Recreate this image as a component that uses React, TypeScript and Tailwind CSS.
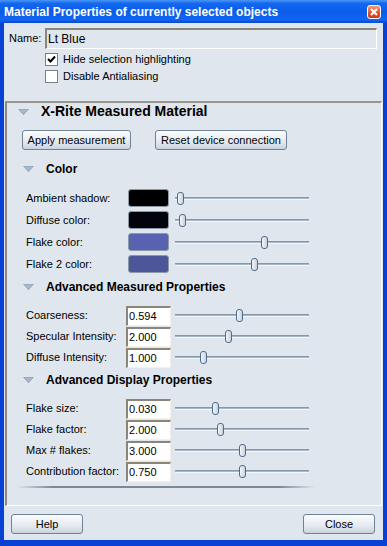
import React from 'react';

// Slider row with absolute thumb over its track
const Slider = ({ pos }: { pos: number }) => (
  <div className="relative h-[15px] w-[134px]">
    <div className="absolute left-0 right-0 top-[6px] h-[3px] border-t border-b border-t-[#8497ab] border-b-[#f4f7fa] bg-[#a9b8c7]" />
    <div
      className="absolute top-[1px] h-[13px] w-[7px] rounded-[3px] border border-[#4f6b89] bg-[linear-gradient(90deg,#f2f6fa,#c6d3e0)]"
      style={{ left: pos - 3 }}
    />
  </div>
);

const Triangle = () => (
  <svg width="11" height="6" viewBox="0 0 11 6" className="shrink-0">
    <path d="M0 0 L11 0 L5.5 6 Z" fill="#8a9cb2" />
    <path d="M1 0.5 L10 0.5 L5.5 5 Z" fill="#a9b8ca" />
  </svg>
);

const SubHeader = ({ title }: { title: string }) => (
  <div className="flex h-[17px] items-center pl-[16px]">
    <Triangle />
    <span className="ml-[12px] text-[12px] font-bold text-black">{title}</span>
  </div>
);

const SwatchRow = ({ label, color, pos }: { label: string; color: string; pos: number }) => (
  <div className="flex h-[22px] items-center">
    <span className="w-[121px] pl-[19px]">{label}</span>
    <div
      className="h-[18px] w-[41px] rounded-[3px] border border-[#8c99a6]"
      style={{ backgroundColor: color }}
    />
    <div className="ml-[6px]">
      <Slider pos={pos} />
    </div>
  </div>
);

const InputRow = ({ label, value, pos }: { label: string; value: string; pos: number }) => (
  <div className="flex h-[21px] items-center">
    <span className="w-[119px] pl-[19px]">{label}</span>
    <div className="flex h-[20px] w-[45px] items-center border-t-2 border-l-2 border-t-[#8a877a] border-l-[#8a877a] border-b border-r border-b-[#f2f1ea] border-r-[#f2f1ea] bg-white pl-[1px]">
      {value}
    </div>
    <div className="ml-[4px]">
      <Slider pos={pos} />
    </div>
  </div>
);

const Button = ({ label, className = '' }: { label: string; className?: string }) => (
  <div
    className={`flex h-[20px] items-center justify-center rounded-[3px] border border-[#6f8296] bg-[linear-gradient(180deg,#fbfcfd,#e4eaf0_60%,#c9d3dd)] ${className}`}
  >
    {label}
  </div>
);

const Checkbox = ({ checked, label }: { checked: boolean; label: string }) => (
  <div className="flex h-[13px] items-center">
    <div className="flex h-[13px] w-[13px] items-center justify-center border border-[#7a7f86] bg-white">
      {checked && (
        <svg width="9" height="9" viewBox="0 0 9 9">
          <path d="M1 4 L3.5 6.5 L8 1.5" stroke="#000" strokeWidth="2" fill="none" />
        </svg>
      )}
    </div>
    <span className="ml-[5px]">{label}</span>
  </div>
);

export default function App() {
  return (
    <div className="h-[546px] w-[387px] overflow-hidden bg-[#0842d4] font-['Liberation_Sans',Arial,sans-serif] text-[11px] text-black">
      {/* Title bar */}
      <div className="flex h-[23px] items-center justify-between bg-[linear-gradient(180deg,#4a96f8_0%,#1468ee_15%,#0a5ceb_50%,#1166f0_85%,#0548d2_100%)] pl-[4px] pr-[6px]">
        <span className="text-[12px] font-bold text-white">Material Properties of currently selected objects</span>
        <div className="flex h-[14px] w-[14px] items-center justify-center rounded-[3px] border border-white bg-[linear-gradient(180deg,#f39a7c,#e0502a_60%,#c83c1a)]">
          <svg width="8" height="8" viewBox="0 0 8 8">
            <path d="M1 1 L7 7 M7 1 L1 7" stroke="#fff" strokeWidth="2" />
          </svg>
        </div>
      </div>

      {/* Client area */}
      <div className="mx-[4px] flex h-[517px] flex-col bg-[#dfe6ed]">
        <div className="mt-[5px] flex items-center pl-[5px] pr-[6px]">
          <span className="w-[36px]">Name:</span>
          <div className="flex h-[21px] flex-1 items-center border-t-2 border-l-2 border-t-[#8a877a] border-l-[#8a877a] border-b border-r border-b-white border-r-white pl-[1px] text-[12px]">
            Lt Blue
          </div>
        </div>
        <div className="mt-[4px] flex flex-col gap-[4px] pl-[41px]">
          <Checkbox checked label="Hide selection highlighting" />
          <Checkbox checked={false} label="Disable Antialiasing" />
        </div>

        {/* Material panel */}
        <div className="mx-[1px] mt-[18px] flex h-[405px] flex-col border-t-2 border-l-2 border-t-[#9a988c] border-l-[#8c897e] border-b border-r border-b-white border-r-white">
          <div className="flex h-[17px] items-center pl-[11px]">
            <Triangle />
            <span className="ml-[12px] text-[14px] font-bold">X-Rite Measured Material</span>
          </div>
          <div className="mt-[10px] flex pl-[15px]">
            <Button label="Apply measurement" className="w-[109px]" />
            <Button label="Reset device connection" className="ml-[24px] w-[132px]" />
          </div>

          <div className="mt-[10px]">
            <SubHeader title="Color" />
          </div>
          <div className="mt-[10px] flex flex-col">
            <SwatchRow label="Ambient shadow:" color="#000000" pos={5} />
            <SwatchRow label="Diffuse color:" color="#03030b" pos={7} />
            <SwatchRow label="Flake color:" color="#5762b0" pos={89} />
            <SwatchRow label="Flake 2 color:" color="#4d5698" pos={79} />
          </div>

          <div className="mt-[3px]">
            <SubHeader title="Advanced Measured Properties" />
          </div>
          <div className="mt-[10px] flex flex-col">
            <InputRow label="Coarseness:" value="0.594" pos={64} />
            <InputRow label="Specular Intensity:" value="2.000" pos={53} />
            <InputRow label="Diffuse Intensity:" value="1.000" pos={28} />
          </div>

          <div className="mt-[3px]">
            <SubHeader title="Advanced Display Properties" />
          </div>
          <div className="mt-[10px] flex flex-col">
            <InputRow label="Flake size:" value="0.030" pos={40} />
            <InputRow label="Flake factor:" value="2.000" pos={45} />
            <InputRow label="Max # flakes:" value="3.000" pos={67} />
            <InputRow label="Contribution factor:" value="0.750" pos={67} />
          </div>
          <div className="ml-[10px] mt-[4px] h-[2px] w-[298px] bg-[linear-gradient(90deg,#dfe6ed,#7d8894_12%,#7d8894_88%,#dfe6ed)]" />
        </div>

        <div className="mt-[8px] flex justify-between pl-[7px] pr-[8px]">
          <Button label="Help" className="w-[72px]" />
          <Button label="Close" className="w-[72px]" />
        </div>
      </div>
    </div>
  );
}
